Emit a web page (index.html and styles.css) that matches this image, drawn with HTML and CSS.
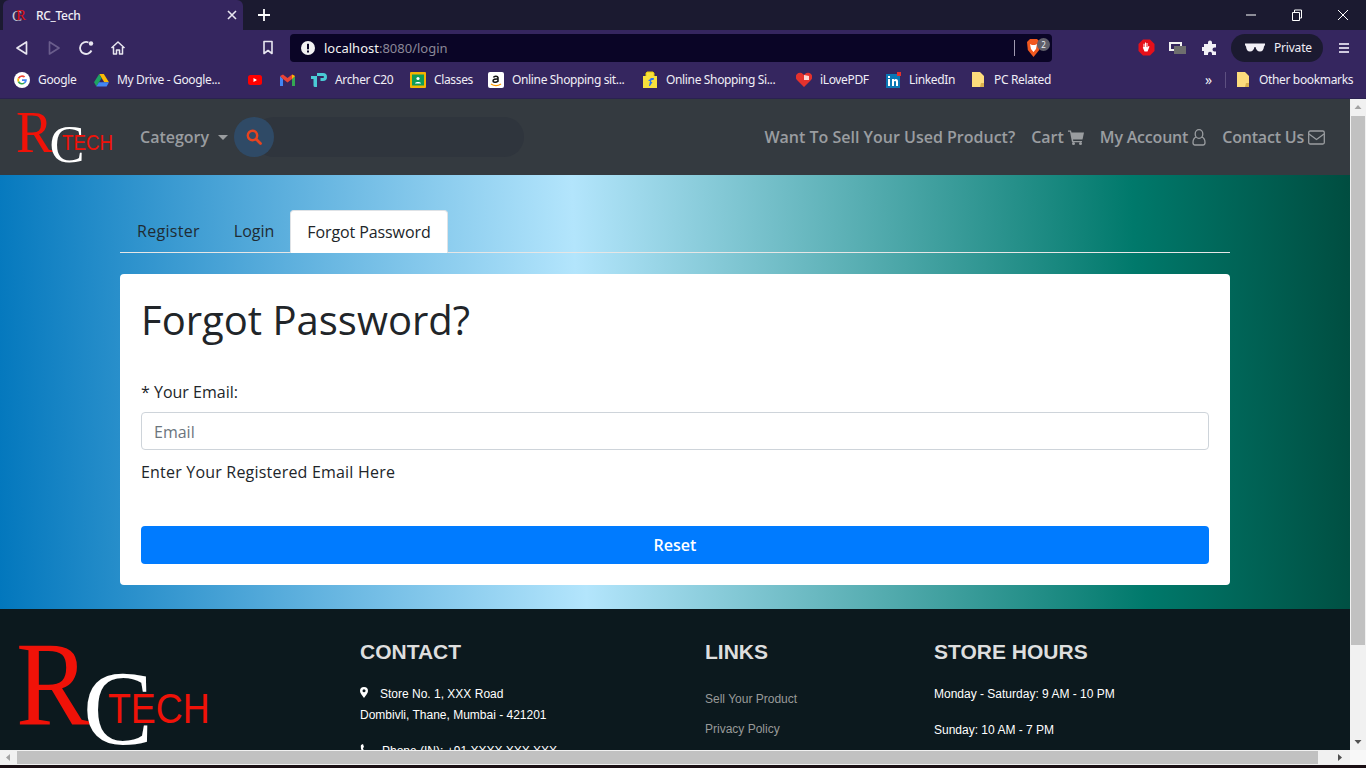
FILE: index.html
```html
<!DOCTYPE html>
<html lang="en">
<head>
  <meta charset="UTF-8" />
  <title>RC_Tech</title>
  <link rel="stylesheet" href="styles.css">
</head>
<body>
<div class="browser">

  <!-- tab strip -->
  <div class="tabstrip">
    <div class="tab">
      <span class="favicon"><span class="fav-c">C</span><span class="fav-r">R</span></span>
      <span class="tab-title">RC_Tech</span>
      <svg class="tab-close" width="10" height="10" viewBox="0 0 10 10"><path d="M1 1l8 8M9 1l-8 8" stroke="#e8e6f0" stroke-width="1.6"/></svg>
    </div>
    <svg class="tab-new" width="14" height="14" viewBox="0 0 14 14"><path d="M7 1v12M1 7h12" stroke="#fff" stroke-width="1.8"/></svg>
    <div class="win-btns">
      <svg width="46" height="30" viewBox="0 0 46 30"><path d="M18 15h10" stroke="#fff"/></svg>
      <svg width="46" height="30" viewBox="0 0 46 30" fill="none"><path d="M18.5 12.5h7v8h-7zM20.5 12.5v-2.500h7v8h-2" stroke="#fff"/></svg>
      <svg width="46" height="30" viewBox="0 0 46 30"><path d="M18 10l10 10M28 10l-10 10" stroke="#fff"/></svg>
    </div>
  </div>

  <!-- toolbar -->
  <div class="toolbar">
    <span class="tool"><svg width="14" height="16" viewBox="0 0 14 16" fill="none"><path d="M11.500 2v12L2 8z" stroke="#e8e6f0" stroke-width="1.700" stroke-linejoin="round"/></svg></span>
    <span class="tool"><svg width="14" height="16" viewBox="0 0 14 16" fill="none"><path d="M2.500 2v12L12 8z" stroke="#6a5d8c" stroke-width="1.700" stroke-linejoin="round"/></svg></span>
    <span class="tool"><svg width="16" height="16" viewBox="0 0 16 16" fill="none"><path d="M13.500 10.500A6 6 0 1 1 10.500 2.500" stroke="#e8e6f0" stroke-width="1.800"/><circle cx="13" cy="3.500" r="2.200" fill="#e8e6f0"/></svg></span>
    <span class="tool"><svg width="16" height="16" viewBox="0 0 16 16" fill="none"><path d="M1.500 8L8 2l6.500 6M3.500 7v7h3v-4h3v4h3V7" stroke="#e8e6f0" stroke-width="1.500" stroke-linejoin="round"/></svg></span>
    <span class="tool tool-bookmark"><svg width="12" height="15" viewBox="0 0 12 15" fill="none"><path d="M2 1.500h8v12l-4-3-4 3z" stroke="#e8e6f0" stroke-width="1.600" stroke-linejoin="round"/></svg></span>
    <div class="urlbar">
      <svg width="14" height="14" viewBox="0 0 14 14"><circle cx="7" cy="7" r="7" fill="#f2f2f2"/><rect x="6" y="2.800" width="2" height="5.500" fill="#0a0526"/><rect x="6" y="9.500" width="2" height="2" fill="#0a0526"/></svg>
      <span class="url"><span class="url-host">localhost</span>:8080/login</span>
      <span class="url-sep"></span>
      <span class="brave">
        <svg width="15" height="18" viewBox="0 0 15 18"><path d="M1 3l3-3h7l3 3-.8 8L7.500 18 1.800 11z" fill="#f1581f"/><path d="M4 5l2 1h3l2-1-1 5-2.500 3L5 10z" fill="#fff"/></svg>
        <span class="brave-count">2</span>
      </span>
    </div>
    <span class="tool tool-ext"><svg width="17" height="17" viewBox="0 0 17 17"><path d="M5 .5h7L16.500 5v7L12 16.500H5L.5 12V5z" fill="#e6101a"/><path d="M5.500 8V4.800h1V8h.5V3.500h1V8h.5V4h1v4.500l1-1.500 1 .5-2 5H6.500L4.800 8.500z" fill="#fff"/></svg></span>
    <span class="tool"><svg width="18" height="14" viewBox="0 0 18 14"><rect x="0" y="1" width="13" height="9" fill="#f2f2f2"/><rect x="2" y="3" width="9" height="5" fill="#35265f"/><rect x="5" y="5" width="12" height="8" fill="#6e6e6e"/></svg></span>
    <span class="tool"><svg width="16" height="16" viewBox="0 0 16 16"><path d="M6 2.500a2 2 0 0 1 4 0V4h4v3.500h-1.500a2 2 0 0 0 0 4H14V15H10v-1.300a2 2 0 0 0-4 0V15H2v-4H.8a2 2 0 0 1 0-4H2V4h4z" fill="#f2f0f6"/></svg></span>
    <div class="private">
      <svg width="20" height="9" viewBox="0 0 20 9"><path d="M0 .5h20v1.500l-1 1.500c-.3 3-1.500 5-4 5s-4-2-4.500-4.500h-1C9 6.500 7.500 8.500 5 8.500S1.300 6.500 1 3.500L0 2z" fill="#f2f0f6"/></svg>
      <span>Private</span>
    </div>
    <span class="tool tool-menu"><span class="menu-lines"></span></span>
  </div>

  <!-- bookmarks bar -->
  <div class="bookmarks">
    <a class="bm"><svg width="16" height="16" viewBox="0 0 16 16"><circle cx="8" cy="8" r="8" fill="#fff"/><path d="M8 3.200a4.800 4.800 0 0 1 3.200 1.200L10 5.600A3 3 0 0 0 5.200 7L3.800 5.800A4.800 4.800 0 0 1 8 3.200z" fill="#ea4335"/><path d="M3.800 5.800L5.200 7a3 3 0 0 0 0 2L3.800 10.200a4.800 4.800 0 0 1 0-4.400z" fill="#fbbc05"/><path d="M3.800 10.200L5.200 9A3 3 0 0 0 9.700 10.500l1.200 1.100A4.800 4.800 0 0 1 3.800 10.200z" fill="#34a853"/><path d="M12.800 7.200H8V9h2.800a2.500 2.500 0 0 1-1.100 1.500l1.200 1.100c1.300-1.200 2.100-2.700 1.900-4.400z" fill="#4285f4"/></svg><span>Google</span></a>
    <a class="bm"><svg width="15" height="14" viewBox="0 0 16 15"><path d="M5.500 1h5L16 10h-5z" fill="#fbbc04"/><path d="M5.500 1L0 10l2.500 4.500L8 5.500z" fill="#1ea362"/><path d="M2.500 14.500L5.300 10H16l-2.500 4.500z" fill="#4285f4"/></svg><span>My Drive - Google...</span></a>
    <a class="bm"><svg width="14" height="10" viewBox="0 0 14 10"><rect width="14" height="10" rx="2.500" fill="#f00"/><path d="M5.500 3v4L9 5z" fill="#fff"/></svg></a>
    <a class="bm"><svg width="15" height="12" viewBox="0 0 15 12"><path d="M0 2v10h3V5z" fill="#4285f4"/><path d="M12 5v7h3V2z" fill="#34a853"/><path d="M0 2l3-1.500L7.500 4 12 .5 15 2l-3 3-4.500 3.500L3 5z" fill="#ea4335"/><path d="M12 .5L15 2l-3 3z" fill="#fbbc04"/></svg></a>
    <a class="bm"><svg width="16" height="16" viewBox="0 0 16 16"><path d="M6 1h6a4 4 0 0 1 0 8H9.500V6H12a1 1 0 0 0 0-2H6z" fill="#4acbd6"/><path d="M6 4v11H4a1.500 1.500 0 0 1-1.500-1.500V7H0V4z" fill="#4acbd6"/></svg><span>Archer C20</span></a>
    <a class="bm"><svg width="16" height="16" viewBox="0 0 16 16"><rect width="16" height="16" rx="1" fill="#f4b400"/><rect x="2" y="2.500" width="12" height="11" fill="#0f9d58"/><circle cx="8" cy="6.500" r="1.600" fill="#fff"/><path d="M5 11.500c0-2 6-2 6 0z" fill="#fff"/></svg><span>Classes</span></a>
    <a class="bm"><svg width="16" height="16" viewBox="0 0 16 16"><rect width="16" height="16" rx="2" fill="#fff"/><path d="M5.500 5.500C6 4 9.500 3.500 10 5.500v4.200M10 7c-3-.2-5 .4-5 2 0 1.500 3.200 1.700 5 .2" fill="none" stroke="#111" stroke-width="1.500"/><path d="M3 12c3 2 7 2 10 0" fill="none" stroke="#f90" stroke-width="1.300"/></svg><span>Online Shopping sit...</span></a>
    <a class="bm"><svg width="16" height="17" viewBox="0 0 16 17"><path d="M1 5h14v12H1z" fill="#f7e03c"/><path d="M4 5V2l1-1h6l1 1v3" fill="#f7e03c" stroke="#e5c800"/><path d="M7 15l1-5H6l3-3h3l-.5 2H9.500L9 11h1.500L8 15z" fill="#2a74f0"/></svg><span>Online Shopping Si...</span></a>
    <a class="bm"><svg width="16" height="15" viewBox="0 0 16 15"><path d="M8 15L1 8a4 4 0 0 1 6-6l1 1 1-1a4 4 0 0 1 6 6z" fill="#e5322d"/><path d="M8 3l5 1v4H8z" fill="#fbd6d4"/></svg><span>iLovePDF</span></a>
    <a class="bm"><svg width="15" height="16" viewBox="0 0 15 16"><rect y="2" width="14" height="14" fill="#0a77b5"/><rect x="11" width="4" height="4" fill="#e5322d"/><rect x="2" y="7" width="2" height="7" fill="#fff"/><rect x="2" y="4" width="2" height="2" fill="#fff"/><path d="M6 7h2v1c1-1.500 4-1.500 4 1.500V14h-2v-4c0-1.200-2-1.200-2 0v4H6z" fill="#fff"/></svg><span>LinkedIn</span></a>
    <a class="bm"><svg class="folder" width="12" height="15" viewBox="0 0 12 15"><path d="M0 0h8l4 4v11H0z" fill="#fddc7c"/><path d="M9 11h3v4H8z" fill="#d9b04e"/></svg><span>PC Related</span></a>
    <span class="bm-more">»</span>
    <span class="bm-sep"></span>
    <a class="bm"><svg class="folder" width="12" height="15" viewBox="0 0 12 15"><path d="M0 0h8l4 4v11H0z" fill="#fddc7c"/><path d="M9 11h3v4H8z" fill="#d9b04e"/></svg><span>Other bookmarks</span></a>
  </div>

  <!-- page area -->
  <div class="viewport">
    <div class="page">

      <nav class="topnav">
        <div class="logo logo-small"><span class="logo-r">R</span><span class="logo-c">C</span><span class="logo-tech">TECH</span></div>
        <a class="nav-link category">Category <span class="caret"></span></a>
        <form class="search">
          <span class="search-btn"><svg width="16" height="16" viewBox="0 0 16 16" fill="none"><circle cx="6.500" cy="6.500" r="4.700" stroke="#e8431f" stroke-width="2.400"/><path d="M10 10l4.500 4.500" stroke="#e8431f" stroke-width="2.800" stroke-linecap="round"/></svg></span>
          <span class="search-input"></span>
        </form>
        <div class="nav-right">
          <a class="nav-link">Want To Sell Your Used Product?</a>
          <a class="nav-link">Cart <svg width="16" height="15" viewBox="0 0 16 15"><path d="M0 .5h3l.5 2H16l-1.500 7H5l.3 1.500H14v1.300H4L2 1.800H0z" fill="#9a9da0"/><circle cx="5.500" cy="13.500" r="1.500" fill="#9a9da0"/><circle cx="12.500" cy="13.500" r="1.500" fill="#9a9da0"/></svg></a>
          <a class="nav-link tight">My Account <svg width="14" height="17" viewBox="0 0 14 17" fill="none" stroke="#9a9da0" stroke-width="1.300"><ellipse cx="7" cy="5" rx="3.800" ry="4.300"/><path d="M4 8C2 9 1 11 1 13.500 1 15 2 16 3 16h8c1 0 2-1 2-2.500 0-2.500-1-4.500-3-5.500"/></svg></a>
          <a class="nav-link tight">Contact Us <svg width="17" height="15" viewBox="0 0 17 15" fill="none" stroke="#9a9da0" stroke-width="1.300"><rect x=".7" y="1" width="15.600" height="13" rx="1.500"/><path d="M1 4l7.500 5.500L16 4"/></svg></a>
        </div>
      </nav>

      <main class="hero">
        <div class="container">
          <ul class="tabs">
            <li class="tab-link tab-register">Register</li>
            <li class="tab-link tab-login">Login</li>
            <li class="tab-link active">Forgot Password</li>
          </ul>
          <section class="card">
            <h1>Forgot Password?</h1>
            <label class="field-label" for="email">* Your Email:</label>
            <input class="field" id="email" type="text" placeholder="Email">
            <p class="help">Enter Your Registered Email Here</p>
            <button class="btn-reset" type="button">Reset</button>
          </section>
        </div>
      </main>

      <footer class="footer">
        <div class="foot-logo">
          <div class="logo logo-big"><span class="logo-r">R</span><span class="logo-c">C</span><span class="logo-tech">TECH</span></div>
        </div>
        <div class="foot-col foot-contact">
          <h3>CONTACT</h3>
          <p class="addr"><svg class="pin" width="8" height="11" viewBox="0 0 8 11"><path d="M4 0a4 4 0 0 1 4 4c0 2-2.500 5-4 7-1.500-2-4-5-4-7a4 4 0 0 1 4-4z" fill="#fff"/><circle cx="4" cy="3.800" r="1.500" fill="#0c191e"/></svg>Store No. 1, XXX Road<br>Dombivli, Thane, Mumbai - 421201</p>
          <p class="addr"><svg class="pin phone" width="8" height="11" viewBox="0 0 8 11"><path d="M1 1l2-1 1 3-1 1c0 1 1 3 2 3l1-1 2 2-1 2C3 11 0 5 1 1z" fill="#fff"/></svg>Phone (IN): +91 XXXX XXX XXX</p>
        </div>
        <div class="foot-col foot-links">
          <h3>LINKS</h3>
          <a>Sell Your Product</a>
          <a>Privacy Policy</a>
        </div>
        <div class="foot-col foot-hours">
          <h3>STORE HOURS</h3>
          <p>Monday - Saturday: 9 AM - 10 PM</p>
          <p>Sunday: 10 AM - 7 PM</p>
        </div>
      </footer>
    </div>

    <div class="vscroll">
      <svg width="16" height="17" viewBox="0 0 16 17"><path d="M4.500 10L8 6l3.500 4z" fill="#a3a3a3"/></svg>
      <div class="vthumb"></div>
      <svg class="vdown" width="16" height="17" viewBox="0 0 16 17"><path d="M4.500 7L8 11l3.500-4z" fill="#505050"/></svg>
    </div>
  </div>

  <div class="hscroll">
    <svg width="17" height="15" viewBox="0 0 17 15"><path d="M10 4v7L6 7.500z" fill="#a3a3a3"/></svg>
    <div class="hthumb"></div>
    <svg width="32" height="15" viewBox="0 0 32 15"><path d="M20 4v7l4-3.500z" fill="#505050"/></svg>
    <div class="corner"></div>
  </div>
  <div class="desktop-strip"></div>
</div>
</body>
</html>
```

FILE: styles.css
```css
html, body {
  margin: 0;
  padding: 0;
  height: 768px;
  overflow: hidden;
  background: #1a0f14;
}

.browser {
  width: 1366px;
  height: 768px;
  display: flex;
  flex-direction: column;
  overflow: hidden;
  font-family: "Noto Sans", Arial, sans-serif;
}

/* Tab strip */
.tabstrip {
  height: 30px;
  flex: none;
  display: flex;
  align-items: center;
  background: #1b1a30;
}
.tab {
  width: 240px;
  height: 30px;
  margin-left: 3px;
  padding: 0 5px 0 9px;
  box-sizing: border-box;
  display: flex;
  align-items: center;
  background: #35265f;
  border-radius: 6px 6px 0 0;
}
.favicon {
  position: relative;
  width: 16px;
  height: 16px;
  font-family: "Liberation Serif", serif;
  font-size: 15px;
  line-height: 16px;
}
.fav-c {
  position: absolute;
  left: 0;
  top: 1px;
  color: #c9c9d0;
}
.fav-r {
  position: absolute;
  left: 4px;
  top: 0;
  color: #e01010;
}
.tab-title {
  margin-left: 8px;
  flex: 1;
  color: #f0eef6;
  font-size: 12px;
  font-weight: 500;
  letter-spacing: -.3px;
}
.tab-close {
  margin-right: 1px;
}
.tab-new {
  margin-left: 14px;
}
.win-btns {
  margin-left: auto;
  display: flex;
  align-items: center;
}
.win-btns svg {
  display: block;
}

/* Toolbar */
.toolbar {
  height: 35px;
  flex: none;
  padding-left: 6px;
  display: flex;
  align-items: center;
  background: #35265f;
}
.tool {
  width: 32px;
  height: 28px;
  flex: none;
  display: flex;
  align-items: center;
  justify-content: center;
}
.tool-bookmark {
  margin-left: 118px;
}
.tool-ext {
  margin-left: 78px;
}
.tool-menu {
  margin-left: 5px;
}
.menu-lines {
  width: 10px;
  height: 2px;
  background: #cfc9de;
  box-shadow: 0 -4px 0 #cfc9de, 0 4px 0 #cfc9de;
}
.urlbar {
  width: 762px;
  height: 28px;
  margin-left: 6px;
  padding: 0 2px 0 11px;
  box-sizing: border-box;
  display: flex;
  align-items: center;
  background: #0a0526;
  border-radius: 4px;
}
.url {
  margin-left: 9px;
  flex: 1;
  color: #8b8898;
  font-size: 13px;
}
.url-host {
  color: #f2f2f2;
}
.url-sep {
  width: 1px;
  height: 16px;
  margin-right: 11px;
  background: #a09ab0;
}
.brave {
  position: relative;
  width: 24px;
  height: 18px;
}
.brave-count {
  position: absolute;
  top: -1px;
  right: 0;
  width: 13px;
  height: 13px;
  border-radius: 50%;
  background: #5f5f6a;
  color: #eee;
  font-size: 8px;
  line-height: 13px;
  text-align: center;
}
.private {
  width: 92px;
  height: 28px;
  margin-left: 5px;
  padding-left: 14px;
  box-sizing: border-box;
  display: flex;
  align-items: center;
  gap: 9px;
  background: #1b1a30;
  border-radius: 14px;
  color: #f0eef6;
  font-size: 12px;
  letter-spacing: -.2px;
}

/* Bookmarks */
.bookmarks {
  height: 34px;
  flex: none;
  padding: 0 0 4px 14px;
  box-sizing: border-box;
  display: grid;
  grid-template-columns: 80px 154px 32px 31px 99px 78px 154px 154px 90px 86px 233px 20px 12px auto;
  align-items: center;
  background: #35265f;
  border-bottom: 1px solid #2a2250;
  color: #f0eef6;
  font-size: 12px;
  letter-spacing: -.35px;
  white-space: nowrap;
}
.bm {
  display: flex;
  align-items: center;
  gap: 8px;
}
.bm svg {
  flex: none;
}
.bm .folder {
  margin-right: 2px;
}
.bm-more {
  font-size: 14px;
  line-height: 14px;
}
.bm-sep {
  width: 1px;
  height: 16px;
  background: #5d5080;
}

/* Page area */
.viewport {
  height: 651px;
  flex: none;
  display: flex;
}
.page {
  width: 1350px;
  height: 651px;
  overflow: hidden;
  font-family: "Comic Sans MS", "Open Sans", sans-serif;
}

.topnav {
  height: 76px;
  padding: 0 25px 0 18px;
  box-sizing: border-box;
  display: flex;
  align-items: center;
  background: #343a40;
}
.nav-link {
  display: inline-flex;
  align-items: center;
  gap: 4px;
  color: #9a9da0;
  font-size: 16px;
  font-weight: 600;
  white-space: nowrap;
}
.nav-link.tight {
  letter-spacing: -.2px;
}
.category {
  margin-left: 27px;
  gap: 9px;
}
.caret {
  width: 0;
  height: 0;
  border-top: 5px solid #9a9da0;
  border-left: 5px solid transparent;
  border-right: 5px solid transparent;
}
.search {
  margin-left: 6px;
  display: flex;
}
.search-btn {
  position: relative;
  z-index: 1;
  width: 40px;
  height: 40px;
  margin-right: -20px;
  display: flex;
  align-items: center;
  justify-content: center;
  background: #2f4a66;
  border-radius: 50%;
}
.search-input {
  width: 270px;
  height: 40px;
  background: #2f353d;
  border-radius: 20px;
}
.nav-right {
  margin-left: auto;
  display: flex;
  align-items: center;
  gap: 16px;
}

/* Logo: same markup for nav and footer, sized through em */
.logo {
  position: relative;
  flex: none;
  width: 1.9em;
  height: 1em;
  line-height: 1;
  white-space: nowrap;
}
.logo-small {
  font-size: 50px;
}
.logo-big {
  font-size: 100px;
}
.logo span {
  position: absolute;
  display: block;
}
.logo-r {
  left: -.03em;
  top: -.16em;
  font-family: "Liberation Serif", serif;
  font-size: 1.2em;
  color: #f01208;
  transform: scaleX(.92);
  transform-origin: 0 0;
}
.logo-c {
  left: .6em;
  top: .115em;
  font-family: "Liberation Serif", serif;
  font-size: 1.05em;
  color: #fff;
}
.logo-tech {
  left: 2.05em;
  top: .99em;
  font-family: "Liberation Sans", sans-serif;
  font-size: .43em;
  color: #f01208;
  transform: scaleX(.87);
  transform-origin: 0 0;
}

/* Main gradient section */
.hero {
  height: 434px;
  box-sizing: border-box;
  padding-top: 35px;
  background: linear-gradient(88deg, #0277bd 0%, #b3e5fc 43%, #00796b 84%, #004d40 100%);
}
.container {
  width: 1110px;
  margin: 0 auto;
}
.tabs {
  list-style: none;
  margin: 0;
  padding: 0;
  display: flex;
  border-bottom: 1px solid #e6e6e6;
}
.tab-link {
  height: 42px;
  padding: 0 17px;
  box-sizing: border-box;
  display: flex;
  align-items: center;
  color: #1f2b33;
  font-size: 16px;
}
.tab-register {
  letter-spacing: .3px;
}
.tab-login {
  padding-right: 16px;
}
.tab-link.active {
  margin-bottom: -1px;
  height: 43px;
  padding: 0 16px;
  background: #fff;
  border: 1px solid #dee2e6;
  border-bottom: 0;
  border-radius: 4px 4px 0 0;
  color: #212529;
  letter-spacing: -.1px;
}
.card {
  height: 311px;
  margin-top: 21px;
  padding: 22px 21px 21px;
  box-sizing: border-box;
  background: #fff;
  border-radius: 4px;
  color: #212529;
}
.card h1 {
  margin: 0;
  font-size: 40px;
  font-weight: 400;
  line-height: 48px;
}
.field-label {
  display: block;
  margin-top: 36px;
  font-size: 16px;
  line-height: 24px;
}
.field {
  display: block;
  width: 100%;
  height: 38px;
  margin-top: 8px;
  padding: 1px 12px 0;
  box-sizing: border-box;
  border: 1px solid #ced4da;
  border-radius: 4px;
  font-family: inherit;
  font-size: 16px;
}
.field::placeholder {
  color: #6c757d;
}
.help {
  margin: 10px 0 0;
  font-size: 16px;
  line-height: 24px;
  letter-spacing: .2px;
}
.btn-reset {
  display: block;
  width: 100%;
  height: 38px;
  margin-top: 42px;
  border: none;
  border-radius: 4px;
  background: #007bff;
  color: #fff;
  font-family: inherit;
  font-size: 16px;
  font-weight: 600;
}

/* Footer */
.footer {
  height: 141px;
  overflow: hidden;
  display: flex;
  background: #0c191e;
  color: #fff;
  font-family: "Liberation Sans", Arial, sans-serif;
  font-size: 12px;
}
.foot-logo {
  width: 360px;
  flex: none;
  padding: 35px 0 0 20px;
  box-sizing: border-box;
}
.foot-col h3 {
  margin: 31px 0 0;
  color: #dedede;
  font-size: 21px;
  font-weight: 700;
  line-height: 24px;
}
.foot-contact {
  width: 345px;
  flex: none;
}
.foot-links {
  width: 229px;
  flex: none;
}
.addr {
  margin: 20px 0 0;
  line-height: 20.500px;
  font-weight: 500;
}
.addr + .addr {
  margin-top: 16px;
}
.pin {
  margin-right: 12px;
}
.pin.phone {
  margin-right: 14px;
}
.foot-links a {
  display: block;
  color: #999;
  line-height: 14px;
  margin-top: 16px;
}
.foot-links h3 + a {
  margin-top: 28px;
}
.foot-hours p {
  margin: 0;
  line-height: 14px;
  margin-top: 22px;
}
.foot-hours h3 + p {
  margin-top: 23px;
}

/* Scrollbars */
.vscroll {
  width: 16px;
  flex: none;
  display: flex;
  flex-direction: column;
  align-items: center;
  background: #f1f1f1;
}
.vscroll svg {
  flex: none;
}
.vthumb {
  width: 14px;
  height: 529px;
  flex: none;
  background: #c1c1c1;
}
.vdown {
  margin-top: auto;
}
.hscroll {
  height: 15px;
  flex: none;
  display: flex;
  align-items: center;
  background: #f1f1f1;
}
.hthumb {
  width: 1301px;
  height: 13px;
  background: #c1c1c1;
}
.corner {
  flex: 1;
  height: 15px;
  background: #f8f8f8;
}
.desktop-strip {
  height: 3px;
  flex: none;
  background: #1a0f14;
}
```
